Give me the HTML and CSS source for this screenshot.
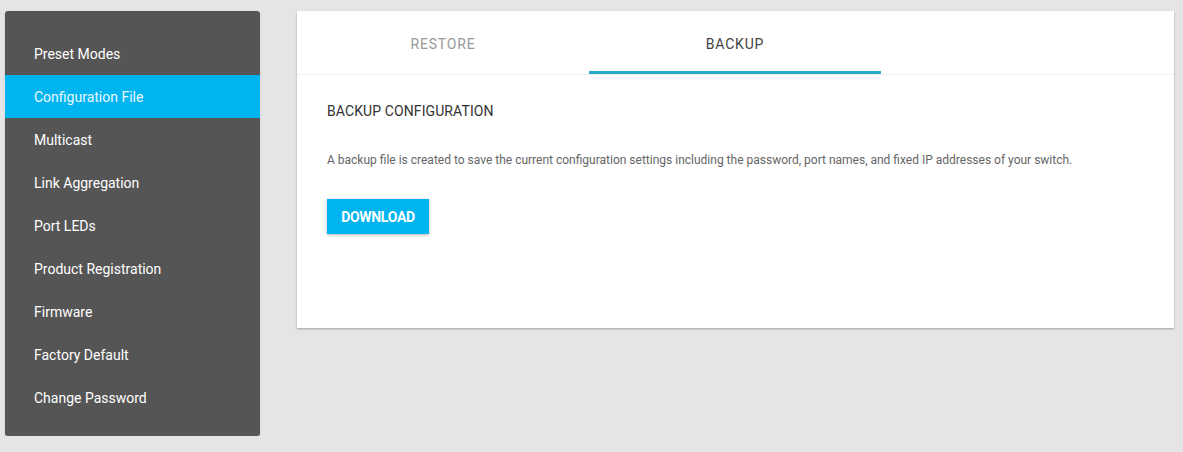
FILE: index.html
```html
<!DOCTYPE html>
<html lang="en">
    <head>
        <meta charset="UTF-8"/>
        <title>Configuration File</title>
        <link rel="stylesheet" href="styles.css">
    </head>
    <body>
        <nav class="sidebar">
          <a href="#" class="nav-item">Preset Modes</a>
          <a href="#" class="nav-item active">Configuration File</a>
          <a href="#" class="nav-item">Multicast</a>
          <a href="#" class="nav-item">Link Aggregation</a>
          <a href="#" class="nav-item">Port LEDs</a>
          <a href="#" class="nav-item">Product Registration</a>
          <a href="#" class="nav-item">Firmware</a>
          <a href="#" class="nav-item">Factory Default</a>
          <a href="#" class="nav-item">Change Password</a>
        </nav>
        <main class="card">
          <div class="tabs">
            <div class="tab">RESTORE</div>
            <div class="tab selected">BACKUP</div>
          </div>
          <section class="panel">
            <h1>BACKUP CONFIGURATION</h1>
            <p>A backup file is created to save the current configuration settings including the password, port names, and fixed IP addresses of your switch.</p>
            <button type="button">DOWNLOAD</button>
          </section>
        </main>
    </body>
</html>
```

FILE: styles.css
```css
body {
  margin: 0;
  background: #e5e5e5;
  font-family: Roboto, "Liberation Sans", sans-serif;
  display: flex;
  align-items: flex-start;
  padding: 11px 9px 0 5px;
  gap: 37px;
}

.sidebar {
  width: 255px;
  flex-shrink: 0;
  background: #555;
  border-radius: 3px;
  padding: 21px 0 17px;
  display: flex;
  flex-direction: column;
  box-shadow: 0 1px 2px rgba(0, 0, 0, 0.15);
}

.nav-item {
  display: block;
  height: 43px;
  box-sizing: border-box;
  padding: 2px 0 0 29px;
  line-height: 41px;
  color: #fff;
  font-size: 14px;
  text-decoration: none;
}
.nav-item.active {
  background: #00b4f0;
  color: #e8f8ff;
}

.card {
  flex: 1;
  background: #fff;
  height: 317px;
  box-shadow: 0 1px 2px rgba(0, 0, 0, 0.3);
}

.tabs {
  display: flex;
  height: 63px;
  border-bottom: 1px solid #f0f0f0;
}
.tab {
  width: 292px;
  text-align: center;
  padding-top: 4px;
  line-height: 59px;
  font-size: 14px;
  letter-spacing: 0.8px;
  color: #999;
  box-sizing: border-box;
}
.tab.selected {
  color: #444;
  border-bottom: 3px solid #29a9c9;
}

.panel {
  padding: 28px 30px;
}

h1 {
  margin: 0;
  font-size: 14px;
  font-weight: normal;
  color: #333;
  letter-spacing: 0.1px;
}

p {
  margin: 34px 0 32px;
  font-size: 12px;
  color: #666;
}

button {
  width: 102px;
  height: 35px;
  border: 0;
  background: #00b4f0;
  color: #fff;
  font-family: Roboto, "Liberation Sans", sans-serif;
  font-weight: bold;
  font-size: 14px;
  letter-spacing: -0.3px;
  box-shadow: 0 1px 3px rgba(0, 0, 0, 0.3);
  padding: 0;
}
```
